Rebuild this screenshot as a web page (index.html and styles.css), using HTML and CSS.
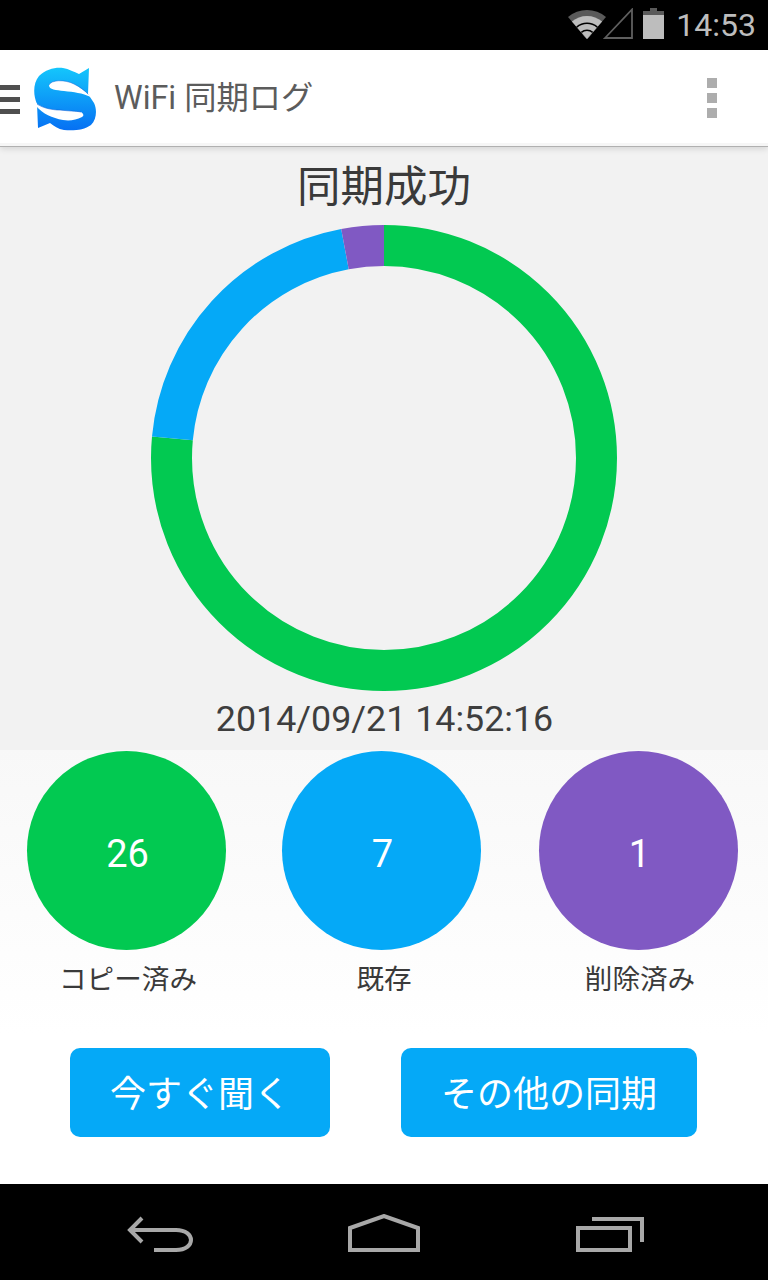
FILE: index.html
```html
<!DOCTYPE html>
<html lang="ja">
<head>
<meta charset="utf-8">
<title>WiFi 同期ログ</title>
<link rel="stylesheet" href="styles.css">
</head>
<body>
<div class="phone">
  <div class="statusbar">
    <svg class="st-wifi" viewBox="0 0 38 29" width="38" height="29">
      <path d="M19 29 L0 7.1 A29 29 0 0 1 38 7.1Z" fill="#5a5a5a"/>
      <path d="M19 29 L3.9 11.6 A23 23 0 0 1 34.1 11.6Z" fill="#bdbdbd"/>
      <path d="M19 29 L8.2 16.5 A16.5 16.5 0 0 1 29.8 16.5Z" fill="#000"/>
      <path d="M19 29 L9.2 17.7 A15 15 0 0 1 28.8 17.7Z" fill="#bdbdbd"/>
      <path d="M19 29 L12.8 21.8 A9.5 9.5 0 0 1 25.2 21.8Z" fill="#000"/>
      <path d="M19 29 L13.8 23 A8 8 0 0 1 24.2 23Z" fill="#bdbdbd"/>
    </svg>
    <svg class="st-signal" viewBox="0 0 30 31" width="30" height="31">
      <path d="M2 30 L29 1.5 V30Z" fill="none" stroke="#5f5f5f" stroke-width="1.8"/>
    </svg>
    <svg class="st-batt" viewBox="0 0 21 31" width="21" height="31">
      <path d="M7 0h7v3h7v5H0V3h7z" fill="#5a5a5a"/>
      <rect x="0" y="7" width="21" height="24" fill="#bdbdbd"/>
    </svg>
    <span class="st-time">14:53</span>
  </div>
  <header class="appbar">
    <div class="burger"><i></i><i></i><i></i></div>
    <svg class="logo" viewBox="0 0 64 64" width="64" height="64">
      <defs>
        <linearGradient id="lg" x1="0" y1="0" x2="0" y2="1">
          <stop offset="0" stop-color="#14c6fc"/>
          <stop offset="1" stop-color="#0670f3"/>
        </linearGradient>
      </defs>
      <path d="M55 1 L54 27 L60 36 C63 42 63 52 57 58 C50 63 40 64 30 63 C24 62 20 59 16 56 L4 61 L3 37 C-1 28 -1 16 5 9 C12 2 22 0 29 1 C35 2 40 5 45 7Z" fill="url(#lg)"/>
      <path d="M15 18 C17 13 30 12 40 17 C46 20 51 24 57 30 C48 26 40 25 30 24 C22 23 15 23 15 18Z" fill="#fff"/>
      <path d="M2 36 C9 41 18 43 26 43 C34 44 42 44 47 45 C50 47 50 49 48 50 C42 53 36 54 29 53 C18 51 9 47 2 39Z" fill="#fff"/>
      <path d="M15 18 C17 13 30 12 40 17 C46 20 50 23 54 27" fill="none" stroke="#0c62d8" stroke-width="1" opacity=".5"/>
      <path d="M3 37 C9 41 18 43 26 43 C34 44 42 44 47 45" fill="none" stroke="#0c62d8" stroke-width="1" opacity=".6"/>
    </svg>
    <h1 class="apptitle">WiFi 同期ログ</h1>
    <div class="overflow"><i></i><i></i><i></i></div>
  </header>
  <main class="summary">
    <h2 class="result">同期成功</h2>
    <svg class="donut" viewBox="0 0 466 466" width="466" height="466">
      <g fill="none" stroke-width="41" transform="rotate(-90 233 233)">
        <circle class="seg-green" cx="233" cy="233" r="212.5" pathLength="34" stroke-dasharray="26 8"/>
        <circle class="seg-blue" cx="233" cy="233" r="212.5" pathLength="34" stroke-dasharray="7 27" stroke-dashoffset="-26"/>
        <circle class="seg-purple" cx="233" cy="233" r="212.5" pathLength="34" stroke-dasharray="1 33" stroke-dashoffset="-33"/>
      </g>
    </svg>
    <div class="stamp">2014/09/21 14:52:16</div>
  </main>
  <section class="stats">
    <div class="stat"><div class="bubble green s1">26</div><div class="label">コピー済み</div></div>
    <div class="stat"><div class="bubble blue s2">7</div><div class="label">既存</div></div>
    <div class="stat"><div class="bubble purple s3">1</div><div class="label">削除済み</div></div>
  </section>
  <section class="actions">
    <button class="btn b1">今すぐ聞く</button>
    <button class="btn b2">その他の同期</button>
  </section>
  <nav class="navbar">
    <svg viewBox="0 0 66 36" width="66" height="36" class="nav-back">
      <path d="M15 2 L3 14 L15 26 M3 14 H49 C69 14 69 34 49 34 H27" fill="none" stroke="#a8a8a8" stroke-width="4"/>
    </svg>
    <svg viewBox="0 0 72 38" width="72" height="38" class="nav-home">
      <path d="M2 36 V14 L36 2 L70 14 V36Z" fill="none" stroke="#a8a8a8" stroke-width="4"/>
    </svg>
    <svg viewBox="0 0 68 36" width="68" height="36" class="nav-recent">
      <path d="M2 12 H54 V34 H2Z M16 3 H66 V26" fill="none" stroke="#a8a8a8" stroke-width="4"/>
    </svg>
  </nav>
</div>
</body>
</html>
```
FILE: styles.css
```css
* { box-sizing: border-box; }
html, body { margin: 0; padding: 0; }
body { width: 768px; height: 1280px; overflow: hidden; font-family: Roboto, "Noto Sans CJK JP", sans-serif; background: #fff; }
.phone { width: 768px; height: 1280px; display: flex; flex-direction: column; }

.statusbar { height: 50px; background: #000; display: flex; align-items: center; justify-content: flex-end; padding-right: 12px; flex: none; }
.st-wifi { margin-bottom: 1px; }
.st-signal { margin-left: -3px; margin-bottom: 3px; }
.st-batt { margin-left: 10px; margin-bottom: 3px; }
.st-time { color: #bdbdbd; font-size: 32px; margin-left: 12px; font-family: Roboto, sans-serif; line-height: 50px; }

.appbar { height: 96px; background: linear-gradient(#fff 93px, #f6f6f6 93px); display: flex; align-items: center; flex: none; box-shadow: 0 1px 0 #b0b0b0, 0 3px 6px rgba(0,0,0,.12); position: relative; z-index: 1; }
.burger { width: 20px; display: flex; flex-direction: column; gap: 7px; margin-right: 14px; margin-top: 3px; }
.burger i { display: block; height: 5px; background: #4f4f4f; }
.logo { flex: none; margin-top: 1px; }
.apptitle { margin: 0 0 0 16px; font-size: 32.3px; font-weight: 400; color: #5c5c5c; line-height: 96px; font-family: Roboto, "Noto Sans CJK JP", sans-serif; }
.overflow { margin-left: auto; margin-right: 51px; display: flex; flex-direction: column; gap: 5px; }
.overflow i { display: block; width: 10px; height: 10px; background: #adadad; }

.summary { height: 604px; background: #f2f2f2; display: flex; flex-direction: column; align-items: center; flex: none; }
.result { margin: 9px 0 0; font-size: 43.5px; font-weight: 400; color: #3a3a3a; line-height: 58px; height: 70px; font-family: "Noto Sans CJK JP", sans-serif; }
.donut { display: block; flex: none; margin-bottom: 7px; }
.seg-green { stroke: #02c951; }
.seg-blue { stroke: #05a9f7; }
.seg-purple { stroke: #8059c3; }
.stamp { font-size: 35.8px; color: #3e3e3e; line-height: 42px; padding-left: 1px; }

.stats { height: 284px; display: grid; grid-template-columns: repeat(3, 256px); background: linear-gradient(#f8f8f8, #fff); padding-top: 1px; flex: none; }
.stat { display: flex; flex-direction: column; align-items: center; }
.bubble { width: 199px; height: 199px; border-radius: 50%; color: #fff; font-size: 38px; display: flex; align-items: center; justify-content: center; padding: 6px 0 0 2px; }
.s1 { margin-left: -3px; }
.s2 { margin-left: -5px; }
.s3 { margin-left: -3px; }
.green { background: #02c951; }
.blue { background: #05a9f7; }
.purple { background: #8059c3; }
.label { margin-top: 8px; font-size: 27.6px; line-height: 38px; color: #3a3a3a; font-family: "Noto Sans CJK JP", sans-serif; }

.actions { height: 150px; background: #fff; display: flex; padding: 14px 0 0 70px; gap: 71px; flex: none; }
.btn { height: 89px; border: 0; border-radius: 10px; background: #05a9f7; color: #fff; font-size: 36px; font-family: "Noto Sans CJK JP", sans-serif; padding: 0 0 4px; }
.b1 { width: 260px; }
.b2 { width: 296px; }

.navbar { height: 96px; background: #000; display: flex; align-items: center; padding-left: 127px; flex: none; }
.nav-back { margin-top: 3px; }
.nav-home { margin-left: 155px; margin-top: 2px; }
.nav-recent { margin-left: 156px; margin-top: 4px; }
```
